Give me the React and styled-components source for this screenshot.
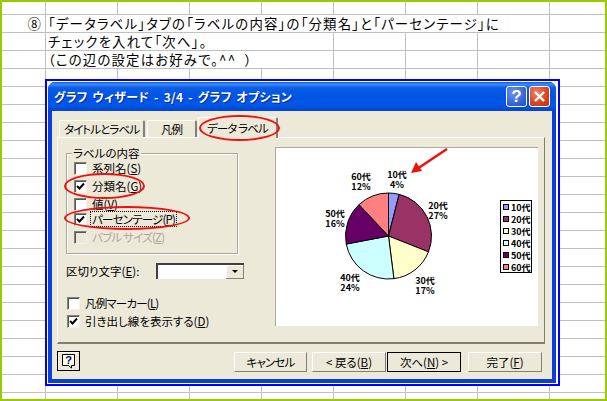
import React from "react";
import styled, { createGlobalStyle } from "styled-components";

const GlobalStyle = createGlobalStyle`
  html, body {
    margin: 0;
    padding: 0;
    background: #fff;
  }
  * {
    box-sizing: border-box;
  }
`;

const JP = `"Noto Sans CJK JP", "Liberation Sans", sans-serif`;

const Page = styled.div`
  position: relative;
  width: 607px;
  height: 401px;
  border: 2px solid #99cc00;
  background: #fff;
  font-family: ${JP};
  color: #000;
  overflow: hidden;
`;

const Sheet = styled.div`
  display: grid;
  grid-template-columns: 44px repeat(7, 72px) 1fr;
  grid-template-rows: 13px repeat(21, 18px) 1fr;
  height: 397px;
`;

const Cell = styled.div`
  grid-column: span ${(props) => props.$span || 1};
  border-right: ${(props) => (props.$last ? "none" : "1px solid #c0c0c0")};
  border-bottom: ${(props) => (props.$bottom ? "none" : "1px solid #c0c0c0")};
  font-size: 13.4px;
  font-feature-settings: "palt";
  letter-spacing: ${(props) => (props.$right ? "0" : "1.2px")};
  line-height: 16px;
  white-space: pre;
  padding-left: 2px;
  text-align: ${(props) => (props.$right ? "right" : "left")};
  padding-right: ${(props) => (props.$right ? "4px" : "0")};
`;

const Frame = styled.div`
  position: absolute;
  left: 43px;
  top: 77px;
  width: 515px;
  height: 307px;
  border: 2px solid #0000ff;
  background: #fff;
  padding: 1px 2px 1px 1px;
`;

const Window = styled.div`
  height: 100%;
  display: flex;
  flex-direction: column;
  background: #0b3fd6;
  border-radius: 7px 7px 0 0;
  overflow: hidden;
  font-size: 11.5px;
  font-feature-settings: "palt";
`;

const TitleBar = styled.div`
  height: 29px;
  flex: none;
  display: flex;
  align-items: center;
  padding: 0 6px 0 6px;
  background: linear-gradient(
    180deg,
    #0a5ae8 0%,
    #3d8cf5 8%,
    #0b5ce6 20%,
    #0054e3 55%,
    #0058ea 80%,
    #0345c8 100%
  );
`;

const TitleText = styled.div`
  flex: 1;
  color: #fff;
  font-weight: 700;
  font-size: 12px;
  letter-spacing: 0.25px;
  word-spacing: 2px;
  text-shadow: 1px 1px 0 #0a2a90;
  white-space: pre;
`;

const CapButton = styled.div`
  width: 21px;
  height: 21px;
  margin-left: ${(props) => (props.$close ? "2px" : "0")};
  border: 1px solid #fff;
  border-radius: 3px;
  display: flex;
  align-items: center;
  justify-content: center;
  color: #fff;
  font: 700 17px "Liberation Sans", sans-serif;
  background: ${(props) =>
    props.$close
      ? "radial-gradient(circle at 35% 30%, #ee8468, #d9431f 60%, #b8320f)"
      : "radial-gradient(circle at 35% 30%, #6d94ee, #3a66d8 60%, #2748b8)"};
`;

const Body = styled.div`
  flex: 1;
  margin: 0 4px 4px;
  background: #ece9d8;
  padding: 6px 7px 0 5px;
  display: flex;
  flex-direction: column;
`;

const Tabs = styled.div`
  display: flex;
  align-items: flex-end;
  height: 20px;
  padding-left: 2px;
  position: relative;
  z-index: 1;
`;

const Tab = styled.div`
  width: ${(props) => props.$w}px;
  height: ${(props) => (props.$active ? "21px" : "17px")};
  margin-left: ${(props) => props.$ml || 0}px;
  margin-bottom: ${(props) => (props.$active ? "-1px" : "0")};
  background: #ece9d8;
  border-top: 1px solid #fff;
  border-left: 1px solid #fff;
  border-right: 2px solid #808080;
  border-radius: 2px 2px 0 0;
  text-align: center;
  letter-spacing: -0.9px;
  line-height: ${(props) => (props.$active ? "21px" : "17px")};
  white-space: nowrap;
`;

const Panel = styled.div`
  height: 207px;
  display: flex;
  align-items: flex-start;
  padding: 9px 0 0 8px;
  background: #ece9d8;
  border-top: 1px solid #fff;
  border-left: 1px solid #fff;
  border-right: 1px solid #808070;
  border-bottom: 2px solid #808070;
`;

const LeftColumn = styled.div`
  width: 178px;
  flex: none;
  padding-top: 6px;
`;

const GroupBox = styled.div`
  position: relative;
  width: 172px;
  height: 101px;
  border: 1px solid #aca899;
  box-shadow: inset 1px 1px 0 #fff, 1px 1px 0 #fff;
  padding-top: 5px;
  padding-left: 7px;
`;

const GroupLabel = styled.div`
  position: absolute;
  left: 5px;
  top: -7px;
  padding: 0 1px;
  background: #ece9d8;
  line-height: 13px;
  white-space: nowrap;
`;

const CheckRow = styled.div`
  display: flex;
  align-items: center;
  height: 18px;
  margin-top: ${(props) => (props.$tight ? "-3px" : "0")};
  color: ${(props) => (props.$disabled ? "#aca899" : "#000")};
  white-space: nowrap;
`;

const Box = styled.div`
  width: 13px;
  height: 13px;
  flex: none;
  margin-right: 4px;
  background: ${(props) => (props.$disabled ? "#ece9d8" : "#fff")};
  border-top: 1px solid #808080;
  border-left: 1px solid #808080;
  border-right: 1px solid #f4f2e8;
  border-bottom: 1px solid #f4f2e8;
  box-shadow: inset 1px 1px 0 #555;
  display: flex;
  align-items: center;
  justify-content: center;
`;

const RowLabel = styled.span`
  padding: 0 1px;
  outline: ${(props) => (props.$focus ? "1px dotted #000" : "none")};
  letter-spacing: ${(props) => (props.$kana ? "-0.8px" : "0")};
  line-height: 14px;
`;

const Under = styled.span`
  text-decoration: underline;
`;

const SeparatorRow = styled.div`
  display: flex;
  align-items: center;
  height: 16px;
  margin-top: 9px;
  white-space: nowrap;
`;

const Select = styled.div`
  width: 88px;
  height: 16px;
  margin-left: auto;
  background: #fff;
  border-top: 2px solid #404040;
  border-left: 2px solid #404040;
  display: flex;
  justify-content: flex-end;
`;

const SelectArrow = styled.div`
  width: 18px;
  height: 14px;
  background: #ece9d8;
  border-right: 1px solid #808080;
  border-bottom: 1px solid #808080;
  box-shadow: inset 1px 1px 0 #fff;
  display: flex;
  align-items: center;
  justify-content: center;
  &::after {
    content: "";
    border-left: 3px solid transparent;
    border-right: 3px solid transparent;
    border-top: 3px solid #000;
  }
`;

const Options = styled.div`
  margin-top: 15px;
  padding-left: 1px;
`;

const ChartArea = styled.div`
  width: 263px;
  height: 179px;
  margin-left: 31px;
  background: #fff;
  border-top: 1px solid #aca899;
  border-left: 1px solid #aca899;
  svg {
    display: block;
    font-family: ${JP};
    font-size: 9px;
    font-weight: 700;
  }
`;

const Footer = styled.div`
  display: flex;
  padding: 8px 3px 0 0;
`;

const HelpButton = styled.div`
  width: 23px;
  height: 20px;
  margin-top: -1px;
  margin-right: auto;
  border: 1px solid #000;
  background: #ece9d8;
  box-shadow: inset 1px 1px 0 #fff;
  display: flex;
  align-items: center;
  justify-content: center;
`;

const Button = styled.div`
  width: ${(props) => props.$w || 74}px;
  height: 20px;
  margin-left: ${(props) => props.$ml || 0}px;
  background: #ece9d8;
  border-top: 1px solid #fff;
  border-left: 1px solid #fff;
  border-right: 1px solid #808070;
  border-bottom: 1px solid #808070;
  outline: ${(props) => (props.$default ? "1px solid #000" : "none")};
  outline-offset: -1px;
  text-align: center;
  letter-spacing: ${(props) => (props.$kana ? "-0.8px" : "0")};
  line-height: 18px;
  white-space: nowrap;
`;

const Ellipse = styled.div`
  position: absolute;
  z-index: 2;
  left: ${(props) => props.$x - 2}px;
  top: ${(props) => props.$y - 2}px;
  width: ${(props) => props.$w}px;
  height: ${(props) => props.$h}px;
  border: 2px solid #f01010;
  border-radius: 50%;
`;

const slices = [
  { name: "10代", pct: 4, color: "#9999ff", x: 397, y: 175 },
  { name: "20代", pct: 27, color: "#993366", x: 438, y: 206 },
  { name: "30代", pct: 17, color: "#ffffcc", x: 425, y: 281 },
  { name: "40代", pct: 24, color: "#ccffff", x: 350, y: 278 },
  { name: "50代", pct: 16, color: "#660066", x: 335, y: 214 },
  { name: "60代", pct: 12, color: "#ff8080", x: 361, y: 177 },
];

const piePoint = (pct) => {
  const a = (pct / 100) * Math.PI * 2;
  return [388.5 + 43 * Math.sin(a), 236 - 43 * Math.cos(a)];
};

const Pie = () => {
  let total = 0;
  return slices.map((s) => {
    const [x1, y1] = piePoint(total);
    total += s.pct;
    const [x2, y2] = piePoint(total);
    return (
      <path
        key={s.name}
        d={`M388.5 236L${x1} ${y1}A43 43 0 0 1 ${x2} ${y2}Z`}
        fill={s.color}
        stroke="#000"
        strokeWidth="1"
      />
    );
  });
};

const Chart = () => (
  <ChartArea>
    <svg width="262" height="178" viewBox="276 148 262 178">
      <Pie />
      {slices.map((s) => (
        <text key={s.name} textAnchor="middle" y={s.y + 3}>
          <tspan x={s.x}>{s.name}</tspan>
          <tspan x={s.x} dy="10">{s.pct}%</tspan>
        </text>
      ))}
      <rect x="500.5" y="200.5" width="31" height="72" fill="#fff" stroke="#000" />
      {slices.map((s, i) => (
        <g key={s.name}>
          <rect x="503.5" y={204.5 + i * 12} width="5" height="5" fill={s.color} stroke="#000" />
          <text x="511" y={210.5 + i * 12}>{s.name}</text>
        </g>
      ))}
      <path d="M447 149L414 171" stroke="#f01010" strokeWidth="2.5" fill="none" />
      <path d="M411 173L416 162L422 171Z" fill="#f01010" />
    </svg>
  </ChartArea>
);

const CheckMark = () => (
  <svg width="9" height="9" viewBox="0 0 9 9">
    <path d="M1 4L3.5 6.5L8 1.5" stroke="#000" strokeWidth="2" fill="none" />
  </svg>
);

const Check = ({ checked, disabled, focus, tight, kana, label, hot }) => (
  <CheckRow $tight={tight} $disabled={disabled}>
    <Box $disabled={disabled}>{checked && <CheckMark />}</Box>
    <RowLabel $focus={focus} $kana={kana}>
      {label}(<Under>{hot}</Under>)
    </RowLabel>
  </CheckRow>
);

const HelpIcon = () => (
  <svg width="15" height="16" viewBox="0 0 15 16">
    <path d="M1.5 1.5H13.5V12.5H10.5V15L7.5 12.5H1.5Z" fill="#ffffe0" stroke="#000" />
    <text x="7.5" y="11" textAnchor="middle" fontSize="11" fontWeight="700" fontFamily="Liberation Sans" fill="#0000a0">?</text>
  </svg>
);

const CloseIcon = () => (
  <svg width="13" height="13" viewBox="0 0 13 13">
    <path d="M2 2L11 11M11 2L2 11" stroke="#fff" strokeWidth="2.4" />
  </svg>
);

const columns = [0, 1, 2, 3, 4, 5, 6, 7, 8];
const rows = Array.from({ length: 23 }, (_, i) => i);

// text rows are merged cells, the rest of the sheet is empty
const textRows = {
  1: { span: 7, text: "「データラベル」タブの「ラベルの内容」の「分類名」と「パーセンテージ」に", mark: "⑧" },
  2: { span: 4, text: "チェックを入れて「次へ」。" },
  3: { span: 4, text: "（この辺の設定はお好みで。^^  ）" },
};

const SheetRow = ({ row }) => {
  const bottom = row === rows.length - 1;
  const merged = textRows[row];
  if (!merged) {
    return columns.map((c) => <Cell key={c} $bottom={bottom} $last={c === 8} />);
  }
  const rest = columns.slice(1 + merged.span);
  return (
    <>
      <Cell $right>{merged.mark}</Cell>
      <Cell $span={merged.span}>{merged.text}</Cell>
      {rest.map((c) => (
        <Cell key={c} $last={c === 8} />
      ))}
    </>
  );
};

const App = () => (
  <>
    <GlobalStyle />
    <Page>
      <Sheet>
        {rows.map((r) => (
          <SheetRow key={r} row={r} />
        ))}
      </Sheet>

      <Frame>
        <Window>
          <TitleBar>
            <TitleText>グラフ ウィザード - 3/4 - グラフ オプション</TitleText>
            <CapButton>?</CapButton>
            <CapButton $close>
              <CloseIcon />
            </CapButton>
          </TitleBar>
          <Body>
            <Tabs>
              <Tab $w={86}>タイトルとラベル</Tab>
              <Tab $w={50} $ml={2}>凡例</Tab>
              <Tab $w={80} $ml={1} $active>データ ラベル</Tab>
            </Tabs>
            <Panel>
              <LeftColumn>
                <GroupBox>
                  <GroupLabel>ラベルの内容</GroupLabel>
                  <Check label="系列名" hot="S" />
                  <Check label="分類名" hot="G" checked />
                  <Check label="値" hot="V" />
                  <Check label="パーセンテージ" hot="P" checked focus tight kana />
                  <Check label="バブル サイズ" hot="Z" disabled kana />
                </GroupBox>
                <SeparatorRow>
                  <span>区切り文字(<Under>E</Under>):</span>
                  <Select>
                    <SelectArrow />
                  </Select>
                </SeparatorRow>
                <Options>
                  <Check label="凡例マーカー" hot="L" kana />
                  <Check label="引き出し線を表示する" hot="D" checked />
                </Options>
              </LeftColumn>
              <Chart />
            </Panel>
            <Footer>
              <HelpButton>
                <HelpIcon />
              </HelpButton>
              <Button $w={73} $kana>キャンセル</Button>
              <Button $ml={5}>&lt; 戻る(<Under>B</Under>)</Button>
              <Button $ml={1} $default>次へ(<Under>N</Under>) &gt;</Button>
              <Button $ml={7}>完了(<Under>F</Under>)</Button>
            </Footer>
          </Body>
        </Window>
      </Frame>

      <Ellipse $x={199} $y={115} $w={81} $h={26} />
      <Ellipse $x={64} $y={173} $w={81} $h={26} />
      <Ellipse $x={64} $y={206} $w={126} $h={24} />
    </Page>
  </>
);

export default App;
